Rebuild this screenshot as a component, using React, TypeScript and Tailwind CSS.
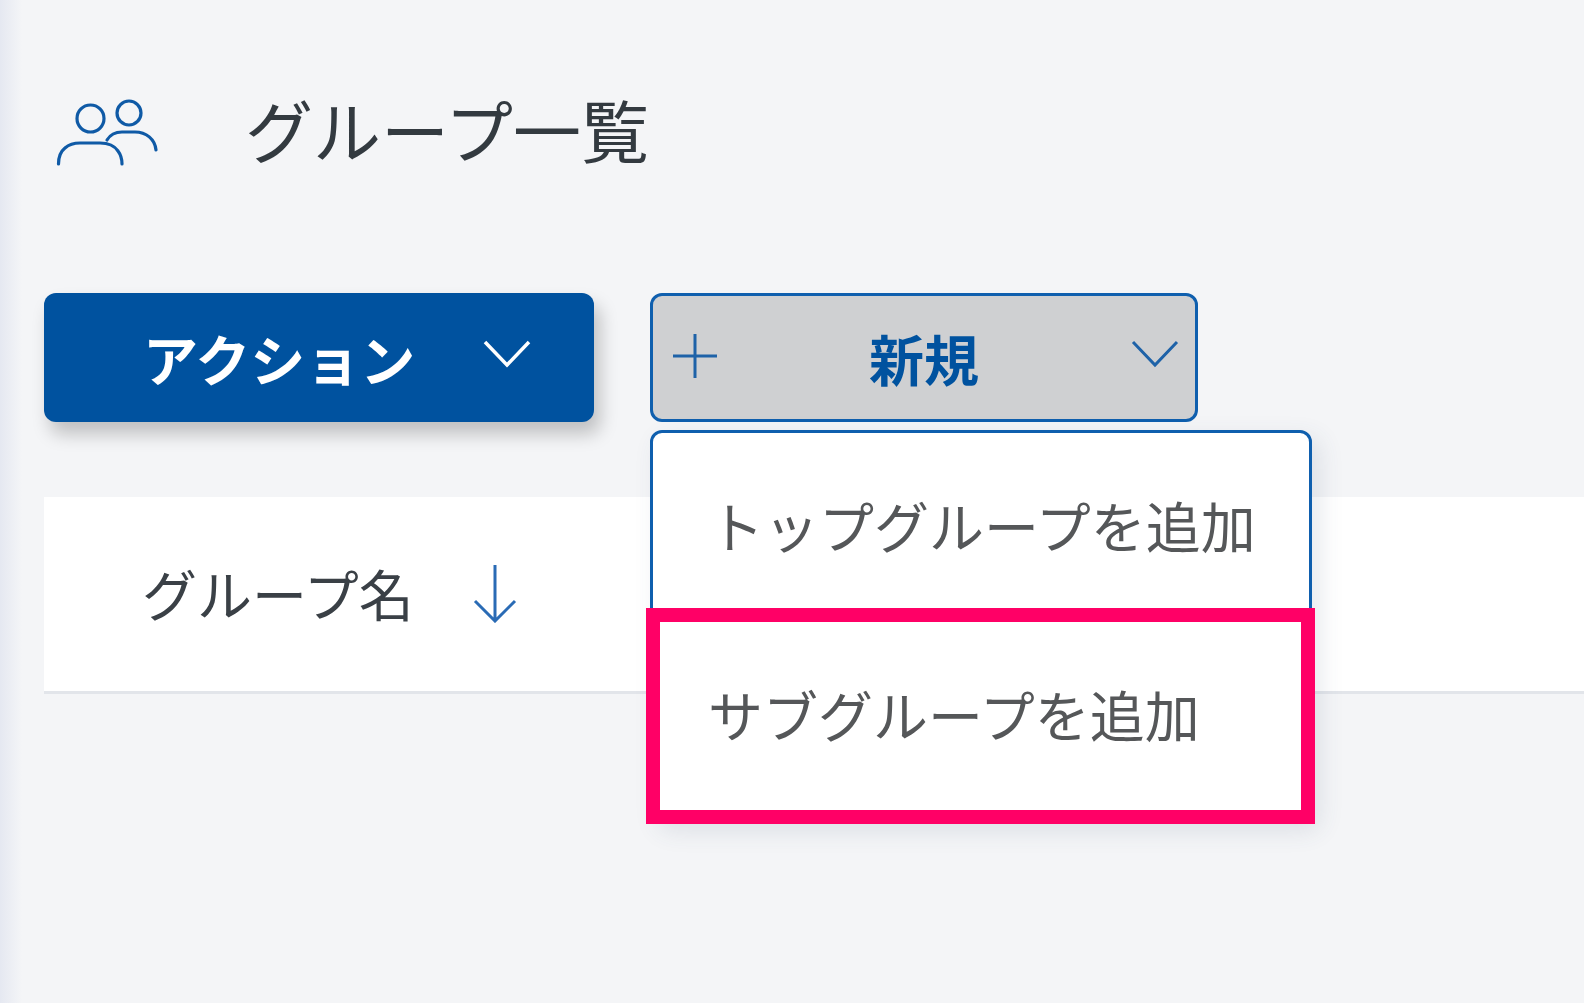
const jpFont = "font-['Noto_Sans_CJK_JP','Noto_Sans',sans-serif]";

const GroupIcon = () => (
  <svg className="w-[102px] h-[70px] shrink-0" viewBox="0 0 102 70" fill="none" stroke="#0f5aa6" strokeWidth="3.2" strokeLinecap="round">
    <circle cx="34.5" cy="21.5" r="13.5" />
    <circle cx="73" cy="16" r="12" />
    <path d="M2.500 67C2.500 60 4 55 9 51C13 47.500 18 46 24 46H44C52 46 58 48 62 54C65 58 66 62 66 67" />
    <path d="M51 43C54 38 60 35 66 35H79C90 35 99 42 100 53" />
  </svg>
);

const Chevron = ({ color, weight }: { color: string; weight: string }) => (
  <svg className="w-[48px] h-[28px] shrink-0" viewBox="0 0 48 28" fill="none" stroke={color} strokeWidth={weight}>
    <path d="M2 2L24 25L46 2" />
  </svg>
);

const App = () => {
  return (
    <div className={`${jpFont} relative w-full h-[1003px] overflow-hidden bg-[#f4f5f7]`}>
      {/* sidebar edge */}
      <div className="absolute left-0 top-0 h-full w-[22px] bg-gradient-to-r from-[#e5e8f1] to-[#f4f5f7]" />

      <div className="relative pt-[97px]">
        <div className="flex items-center pl-[56px] h-[70px]">
          <GroupIcon />
          <h1 className="ml-[87px] -mt-[6px] text-[68px] leading-none font-normal text-[#333a40]">グループ一覧</h1>
        </div>

        <div className="flex items-start gap-[56px] mt-[126px] ml-[44px]">
          <button className="flex items-center w-[550px] h-[129px] pl-[99px] rounded-[12px] bg-[#00529f] text-white shadow-[6px_12px_18px_rgba(0,0,0,0.22)]">
            <span className="text-[55px] leading-none font-bold">アクション</span>
            <span className="ml-[68px] -mt-[8px]"><Chevron color="#ffffff" weight="3.5" /></span>
          </button>

          <div className="relative">
            <button className="flex items-center w-[548px] h-[129px] rounded-[12px] border-[3px] border-[#0f5fae] bg-[#cfd0d2] text-[#00529f]">
              <svg className="ml-[20px] w-[44px] h-[44px] shrink-0 -mt-[4px]" viewBox="0 0 44 44" fill="none" stroke="#1e62a8" strokeWidth="3">
                <path d="M22 0V44M0 22H44" />
              </svg>
              <span className="ml-[152px] text-[55px] leading-none font-bold">新規</span>
              <span className="ml-[152px] -mt-[8px]"><Chevron color="#1e62a8" weight="3" /></span>
            </button>

            {/* dropdown menu */}
            <div className="absolute left-0 top-[137px] z-10 w-[662px] h-[393px] rounded-[12px] border-[3px] border-[#0f5fae] bg-white shadow-[8px_8px_24px_rgba(60,70,110,0.12)]">
              <div className="flex items-center h-[182px] pl-[56px] text-[55px] leading-none text-[#555759]">トップグループを追加</div>
              <div className="flex items-center h-[196px] pl-[55px] text-[55px] leading-none text-[#555759]">サブグループを追加</div>
            </div>

            {/* highlight */}
            <div className="absolute left-[-4px] top-[315px] z-20 w-[669px] h-[216px] border-[14px] border-[#ff0066]" />
          </div>
        </div>

        <div className="flex items-center mt-[75px] ml-[44px] h-[197px] bg-white border-b-[3px] border-[#e2e5ea]">
          <span className="ml-[98px] -mt-[4px] text-[55px] leading-none text-[#3a4046]">グループ名</span>
          <svg className="ml-[59px] w-[44px] h-[58px] shrink-0" viewBox="0 0 44 58" fill="none" stroke="#2a6bb5" strokeWidth="3">
            <path d="M22 0V56M2 36L22 56L42 36" />
          </svg>
        </div>
      </div>
    </div>
  );
};

export default App;
